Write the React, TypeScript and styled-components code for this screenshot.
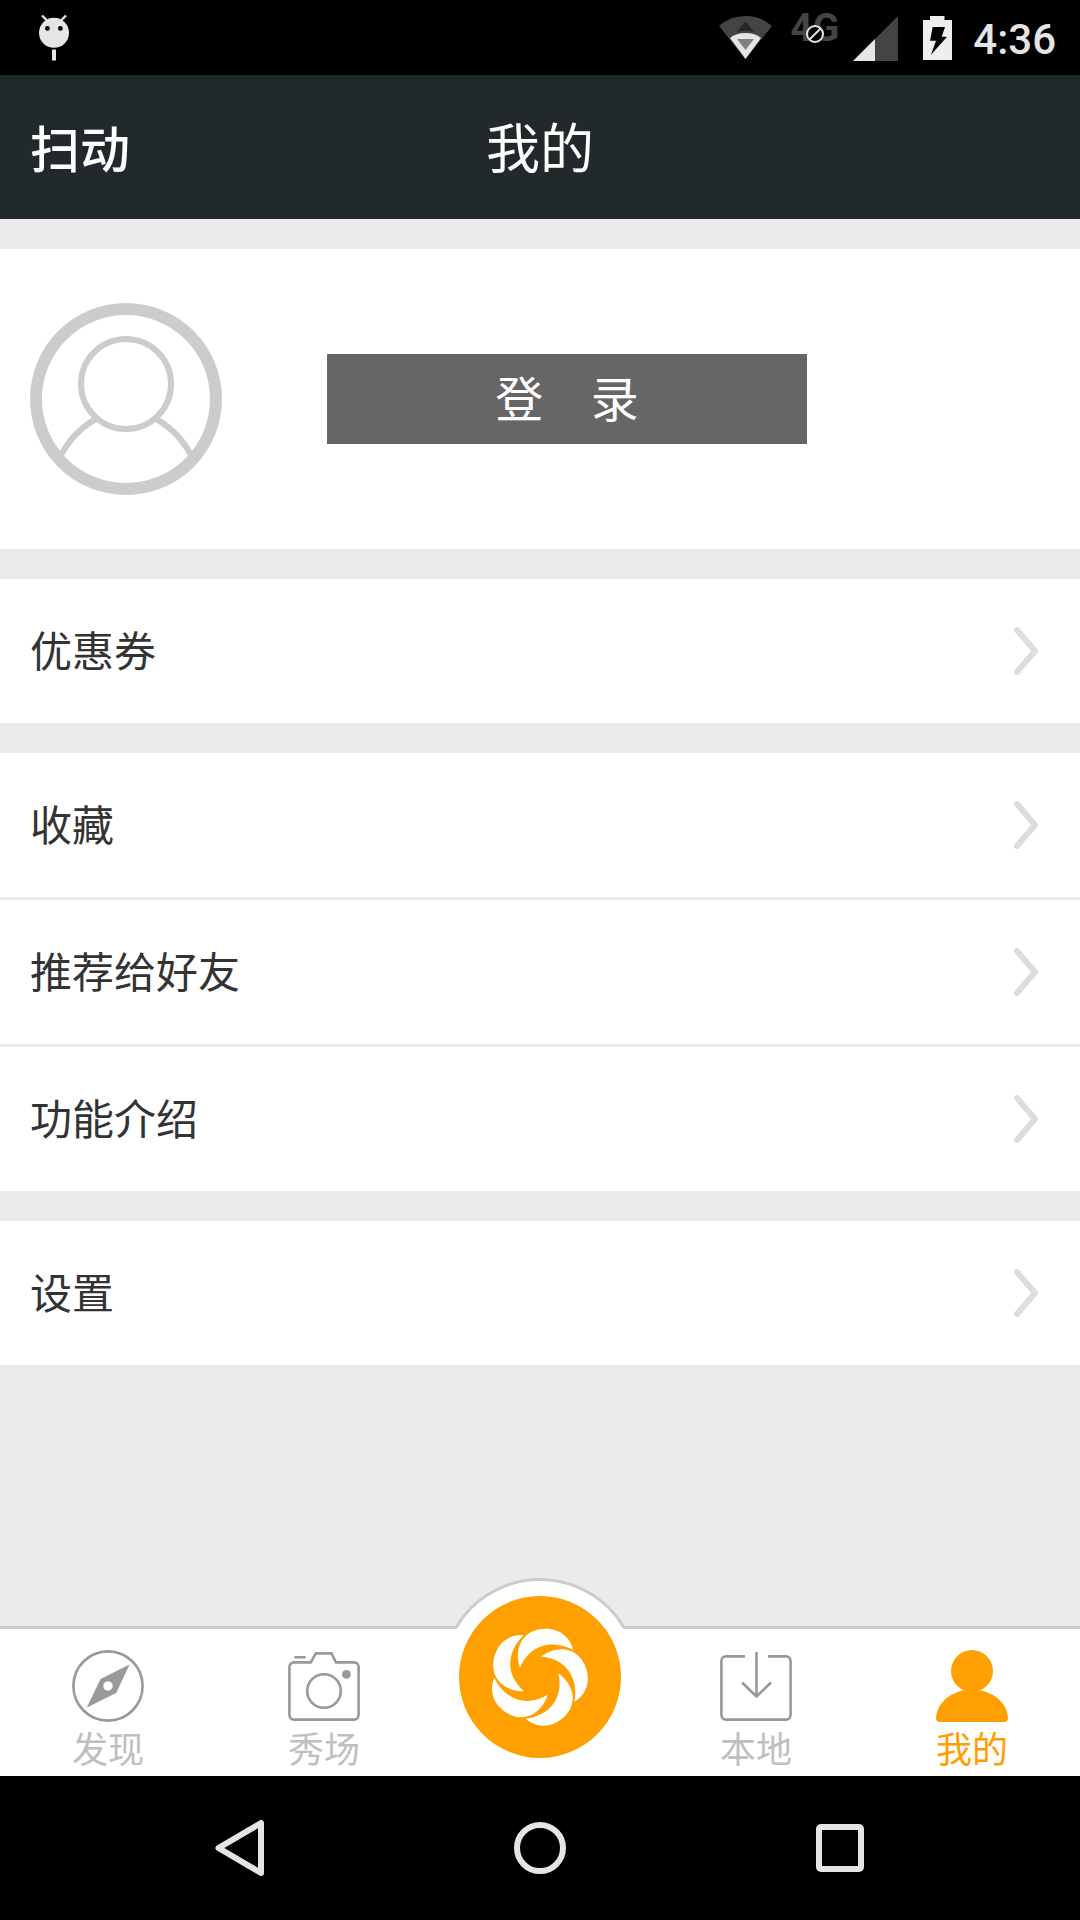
import React from 'react';
import styled, { createGlobalStyle } from 'styled-components';

const GlobalStyle = createGlobalStyle`
  * {
    box-sizing: border-box;
  }
  body {
    margin: 0;
    background: #ebebeb;
    font-family: Roboto, 'Noto Sans CJK SC', sans-serif;
    color: #333;
  }
  button {
    font: inherit;
    border: 0;
    padding: 0;
    cursor: pointer;
  }
  a {
    color: inherit;
    text-decoration: none;
  }
  svg {
    display: block;
    flex: none;
  }
`;

const Screen = styled.div`
  min-height: 100vh;
  display: flex;
  flex-direction: column;
`;

const StatusBar = styled.div`
  height: 75px;
  padding: 0 24px 0 36px;
  display: flex;
  align-items: center;
  justify-content: space-between;
  background: #000;
  color: #e5e5e5;
`;

const StatusGroup = styled.div`
  display: flex;
  align-items: center;
`;

const Network = styled.div`
  position: relative;
  height: 48px;
  margin: 0 14px 0 16px;
  color: #444;
  font-size: 39px;
  line-height: 28px;
  font-weight: 700;
`;

const NoService = styled.svg`
  position: absolute;
  left: 15px;
  top: 10px;
`;

const Battery = styled.svg`
  margin: 0 21px 0 25px;
`;

const Clock = styled.time`
  font-size: 42px;
  line-height: 48px;
  font-weight: 500;
  padding-top: 4px;
`;

const Header = styled.header`
  height: 144px;
  padding: 8px 30px 0;
  display: grid;
  grid-template-columns: 1fr auto 1fr;
  align-items: center;
  background: #22292b;
  color: #fff;
`;

const Brand = styled.span`
  font-size: 50px;
  line-height: 60px;
  font-weight: 500;
`;

const Title = styled.h1`
  margin: 0;
  font-size: 54px;
  line-height: 66px;
  font-weight: 400;
`;

const Content = styled.main`
  flex: 1;
  display: flex;
  flex-direction: column;
  gap: 30px;
  padding: 30px 0 60px;
`;

const Profile = styled.section`
  display: flex;
  align-items: center;
  gap: 105px;
  padding: 54px 30px;
  background: #fff;
`;

const LoginButton = styled.button`
  width: 480px;
  height: 90px;
  padding-top: 4px;
  background: #666;
  color: #fff;
  font-size: 48px;
  line-height: 60px;
  white-space: pre;
`;

const Menu = styled.nav`
  display: flex;
  flex-direction: column;
  gap: 3px;
`;

const MenuRow = styled.a`
  height: 144px;
  padding: 0 42px 0 30px;
  display: flex;
  align-items: center;
  justify-content: space-between;
  background: #fff;
`;

const RowLabel = styled.span`
  padding-top: 4px;
  font-size: 42px;
  line-height: 54px;
`;

const TabBar = styled.nav`
  height: 150px;
  display: grid;
  grid-template-columns: repeat(5, 1fr);
  background: #fff;
  border-top: 3px solid #ccc;
`;

const Tab = styled.a<{ $active?: boolean }>`
  display: flex;
  flex-direction: column;
  align-items: center;
  gap: 7px;
  padding-top: 21px;
  color: ${(p) => (p.$active ? '#ffa000' : '#bfbfbf')};
  font-size: 36px;
  line-height: 45px;
`;

const CenterTab = styled.div`
  position: relative;
`;

const ScanButton = styled.button`
  position: absolute;
  left: 50%;
  bottom: 0;
  transform: translateX(-50%);
  background: none;
`;

const NavBar = styled.div`
  height: 144px;
  padding: 0 90px;
  display: grid;
  grid-template-columns: repeat(3, 1fr);
  background: #000;
`;

const NavButton = styled.button`
  display: grid;
  place-items: center;
  background: none;
`;

const groups = [['优惠券'], ['收藏', '推荐给好友', '功能介绍'], ['设置']];

const Chevron = () => (
  <svg width="24" height="48" viewBox="0 0 24 48" fill="none" stroke="#ddd" strokeWidth="6" strokeLinecap="round" strokeLinejoin="round">
    <path d="M3 3 21 24 3 45" />
  </svg>
);

const Avatar = () => (
  <svg width="192" height="192" viewBox="0 0 192 192" fill="none" stroke="#ccc" strokeWidth="6">
    <circle cx="96" cy="96" r="90" strokeWidth="12" />
    <circle cx="96" cy="81" r="45" />
    <path d="M66 116Q44 128 31 152M126 116q22 12 35 36" />
  </svg>
);

const CompassIcon = () => (
  <svg width="72" height="72" viewBox="0 0 72 72">
    <circle cx="36" cy="36" r="34.6" fill="none" stroke="#999" strokeWidth="2.6" />
    <path fill="#999" fillRule="evenodd" d="M57 15 44 42.7 15.4 57 28.7 29.3ZM36 31a5 5 0 1 0 0 10 5 5 0 0 0 0-10Z" stroke="#999" strokeWidth=".6" strokeLinejoin="round" />
  </svg>
);

const CameraIcon = () => (
  <svg width="72" height="72" viewBox="0 0 72 72" fill="none" stroke="#999" strokeWidth="2.6">
    <path d="M6 12.4h16.8l5-9h15.6l4.6 9H66a4.6 4.6 0 0 1 4.6 4.6v48a4.6 4.6 0 0 1-4.6 4.6H6A4.6 4.6 0 0 1 1.4 65V17A4.6 4.6 0 0 1 6 12.4Z" />
    <circle cx="36" cy="41" r="16.8" />
    <path d="M7.5 7.3h9" strokeLinecap="round" />
    <circle cx="58.4" cy="24.3" r="4.4" fill="#999" stroke="none" />
  </svg>
);

const DownloadIcon = () => (
  <svg width="72" height="72" viewBox="0 0 72 72" fill="none" stroke="#999" strokeWidth="2.6">
    <path d="M25 6.4H6A4.6 4.6 0 0 0 1.4 11v54A4.6 4.6 0 0 0 6 69.6h60a4.6 4.6 0 0 0 4.6-4.6V11A4.6 4.6 0 0 0 66 6.4H48" />
    <path d="M36.5 2v45M22 32.5l14.5 14 14.5-14" strokeLinejoin="round" />
  </svg>
);

const PersonIcon = () => (
  <svg width="72" height="72" viewBox="0 0 72 72" fill="#ffa000">
    <circle cx="36" cy="21" r="21" />
    <path d="M27 40.500h18C60 44 71 54 72 68q0 4-4 4H4q-4 0-4-4C1 54 12 44 27 40.500Z" />
  </svg>
);

const ScanIcon = () => (
  <svg width="200" height="198" viewBox="0 0 200 198">
    <clipPath id="bulge">
      <path d="M0 0h200v51H0Z" />
    </clipPath>
    <circle cx="100" cy="99" r="97.5" fill="#fff" stroke="#ccc" strokeWidth="3" clipPath="url(#bulge)" />
    <circle cx="100" cy="99" r="81" fill="#ffa000" />
    <g transform="translate(98.3 98.7) scale(.3333)" fill="#fff">
      {[0, 72, 144, 216, 288].map((angle) => (
        <path key={angle} transform={`rotate(${angle})`} d="M-55-27C-74-86-47-144 23-144 66-144 97-116 105-80 55-108-20-108-55-27Z" />
      ))}
    </g>
  </svg>
);

export default function App() {
  return (
    <Screen>
      <GlobalStyle />
      <StatusBar>
        <svg width="36" height="50" viewBox="36 14 36 50" fill="#e5e5e5">
          <circle cx="54" cy="33.8" r="15" />
          <path d="m42 16.5 5 5M66 16.5l-5 5" stroke="#e5e5e5" strokeWidth="2.4" />
          <path d="M52 50.5h4v11h-4z" />
          <circle cx="47.4" cy="29.4" r="2.4" fill="#000" />
          <circle cx="60.4" cy="29.4" r="2.4" fill="#000" />
        </svg>
        <StatusGroup>
          <svg width="56" height="46" viewBox="718 14 56 46">
            <path fill="#444" d="M719 25Q730 15 745.5 15T772 25L745.5 58Z" />
            <path fill="#e5e5e5" d="M730 37q6-5 15.5-5t15.5 5l-15.5 21Z" />
            <path fill="#808080" d="M737 38h17l-8.500 11Z" />
            <path fill="#262626" d="M737 31q8-3 17 0l-8.500-11Z" />
          </svg>
          <Network>
            4G
            <NoService width="20" height="20" viewBox="0 0 20 20" fill="none" stroke="#e5e5e5" strokeWidth="2">
              <circle cx="10" cy="10" r="8" fill="#000" />
              <path d="m4.500 15.500 11-11" />
            </NoService>
          </Network>
          <svg width="45" height="46" viewBox="853 14 45 46">
            <path fill="#444" d="M853 60 898 15V60Z" />
            <path fill="#e5e5e5" d="M853 60 875 38V60Z" />
          </svg>
          <Battery width="29" height="46" viewBox="923 14 29 46">
            <path fill="#eee" d="M923 19h7v-4h14.500v4H952v40h-29Z" />
            <path fill="#000" d="M932.700 26H945l-3.300 9.700h5.300l-16 18 5-14h-6Z" />
          </Battery>
          <Clock>4:36</Clock>
        </StatusGroup>
      </StatusBar>

      <Header>
        <Brand>扫动</Brand>
        <Title>我的</Title>
      </Header>

      <Content>
        <Profile>
          <Avatar />
          <LoginButton type="button">{'登    录'}</LoginButton>
        </Profile>
        {groups.map((rows) => (
          <Menu key={rows[0]}>
            {rows.map((label) => (
              <MenuRow key={label} href="#">
                <RowLabel>{label}</RowLabel>
                <Chevron />
              </MenuRow>
            ))}
          </Menu>
        ))}
      </Content>

      <TabBar>
        <Tab href="#"><CompassIcon />发现</Tab>
        <Tab href="#"><CameraIcon />秀场</Tab>
        <CenterTab>
          <ScanButton type="button" aria-label="扫动"><ScanIcon /></ScanButton>
        </CenterTab>
        <Tab href="#"><DownloadIcon />本地</Tab>
        <Tab href="#" $active><PersonIcon />我的</Tab>
      </TabBar>

      <NavBar>
        <NavButton type="button" aria-label="返回">
          <svg width="60" height="60" viewBox="0 0 60 60" fill="none" stroke="#e5e5e5" strokeWidth="6" strokeLinejoin="round">
            <path d="M8.500 30 51 5V55Z" />
          </svg>
        </NavButton>
        <NavButton type="button" aria-label="主页">
          <svg width="60" height="60" viewBox="0 0 60 60" fill="none" stroke="#e5e5e5" strokeWidth="6">
            <circle cx="30" cy="30" r="23" />
          </svg>
        </NavButton>
        <NavButton type="button" aria-label="最近任务">
          <svg width="60" height="60" viewBox="0 0 60 60" fill="none" stroke="#e5e5e5" strokeWidth="6">
            <rect x="9" y="9" width="42" height="42" rx="2" />
          </svg>
        </NavButton>
      </NavBar>
    </Screen>
  );
}
